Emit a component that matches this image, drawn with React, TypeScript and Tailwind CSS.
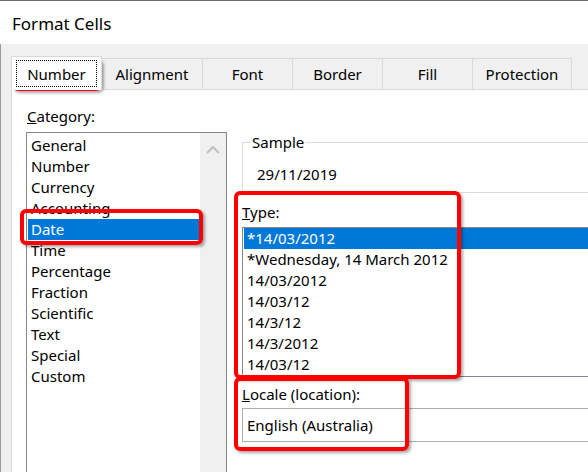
import React from "react";

const cats = [
  "General",
  "Number",
  "Currency",
  "Accounting",
  "Date",
  "Time",
  "Percentage",
  "Fraction",
  "Scientific",
  "Text",
  "Special",
  "Custom",
];

const types = [
  "*14/03/2012",
  "*Wednesday, 14 March 2012",
  "14/03/2012",
  "14/03/12",
  "14/3/12",
  "14/3/2012",
  "14/03/12",
];

const tabs = [
  { label: "Alignment", w: "w-[101px]" },
  { label: "Font", w: "w-[90px]" },
  { label: "Border", w: "w-[90px]" },
  { label: "Fill", w: "w-[90px]" },
  { label: "Protection", w: "w-[99px]" },
];

export default function App() {
  return (
    <div className="relative w-[588px] h-[472px] overflow-hidden bg-[#f0f0f0] text-black font-['Noto_Sans',sans-serif] text-[15px] leading-[21px] border-t border-[#6b6b6b]">
      {/* title bar */}
      <div className="h-[43px] bg-white pl-[12px] flex items-center text-[17px] pt-px">
        Format Cells
      </div>

      <div className="flex h-[428px]">
        <div className="w-[11px] shrink-0 border-l border-[#9a9a9a]" />
        <div className="flex flex-col shrink-0 w-[700px] min-h-0">
          {/* tabs */}
          <div className="flex items-end h-[45px] shrink-0">
            <div className="relative z-10 -mb-px h-[34px] w-[91px] bg-white border-l border-t border-r border-[#d9d9d9] flex items-center justify-center">
              <span className="pt-[1px]">Number</span>
              <div className="absolute left-[4px] right-[4px] top-[3px] bottom-[3px] border border-dotted border-black" />
            </div>
            {tabs.map((t) => (
              <div
                key={t.label}
                className={`${t.w} h-[31px] border-t border-r border-[#d9d9d9] flex items-center justify-center`}
              >
                {t.label}
              </div>
            ))}
          </div>

          {/* pane */}
          <div className="flex-1 min-h-0 overflow-hidden bg-white border-l border-t border-[#d9d9d9] flex">
            {/* category column */}
            <div className="ml-[14px] w-[201px] shrink-0 pt-[16px]">
              <div className="pl-px">
                <span className="underline">C</span>ategory:
              </div>
              <div className="mt-[5px] h-[400px] border border-[#828790] flex">
                <div className="flex-1 pt-[2px] px-px">
                  {cats.map((c) => (
                    <div
                      key={c}
                      className={`h-[21px] pl-[3px] ${c === "Date" ? "bg-[#0078d7] text-white" : ""}`}
                    >
                      {c}
                    </div>
                  ))}
                </div>
                <div className="w-[26px] bg-[#f0f0f0] flex justify-center pt-[12px]">
                  <svg width="14" height="9" viewBox="0 0 14 9">
                    <polyline
                      points="1,8 7,2 13,8"
                      fill="none"
                      stroke="#c2c2c2"
                      strokeWidth="2.2"
                    />
                  </svg>
                </div>
              </div>
            </div>

            {/* right column */}
            <div className="ml-[15px] w-[420px] shrink-0 pt-[42px]">
              <fieldset className="border border-[#dcdcdc]">
                <legend className="ml-[8px] px-px">Sample</legend>
                <div className="pl-[14px] pt-[11px] pb-[7px]">29/11/2019</div>
              </fieldset>

              <div className="mt-[9px]">
                <span className="underline">T</span>ype:
              </div>
              <div className="mt-[4px] h-[150px] border border-[#828790] overflow-hidden">
                <div className="pl-px">
                  {types.map((t, i) => (
                    <div
                      key={i}
                      className={`h-[21px] pl-[3px] whitespace-nowrap ${i === 0 ? "bg-[#0078d7] text-white" : ""}`}
                    >
                      {t}
                    </div>
                  ))}
                </div>
              </div>

              <div className="mt-[7px]">
                <span className="underline">L</span>ocale (location):
              </div>
              <div className="mt-[3px] h-[34px] border border-[#adadad] flex items-center pl-[4px]">
                English (Australia)
              </div>
            </div>
          </div>
        </div>
      </div>

      {/* annotation boxes */}
      <div className="absolute left-[12px] top-[57px] w-[90px] h-[33px] border-4 border-[#ff0000] rounded-[6px] shadow-[2px_2px_3px_rgba(0,0,0,0.35)]" />
      <div className="absolute left-[20px] top-[208px] w-[183px] h-[36px] border-4 border-[#ff0000] rounded-[6px] shadow-[2px_2px_3px_rgba(0,0,0,0.35)]" />
      <div className="absolute left-[234px] top-[190px] w-[227px] h-[188px] border-4 border-[#ff0000] rounded-[6px] shadow-[2px_2px_3px_rgba(0,0,0,0.35)]" />
      <div className="absolute left-[234px] top-[376px] w-[175px] h-[74px] border-4 border-[#ff0000] rounded-[6px] shadow-[2px_2px_3px_rgba(0,0,0,0.35)]" />
    </div>
  );
}
